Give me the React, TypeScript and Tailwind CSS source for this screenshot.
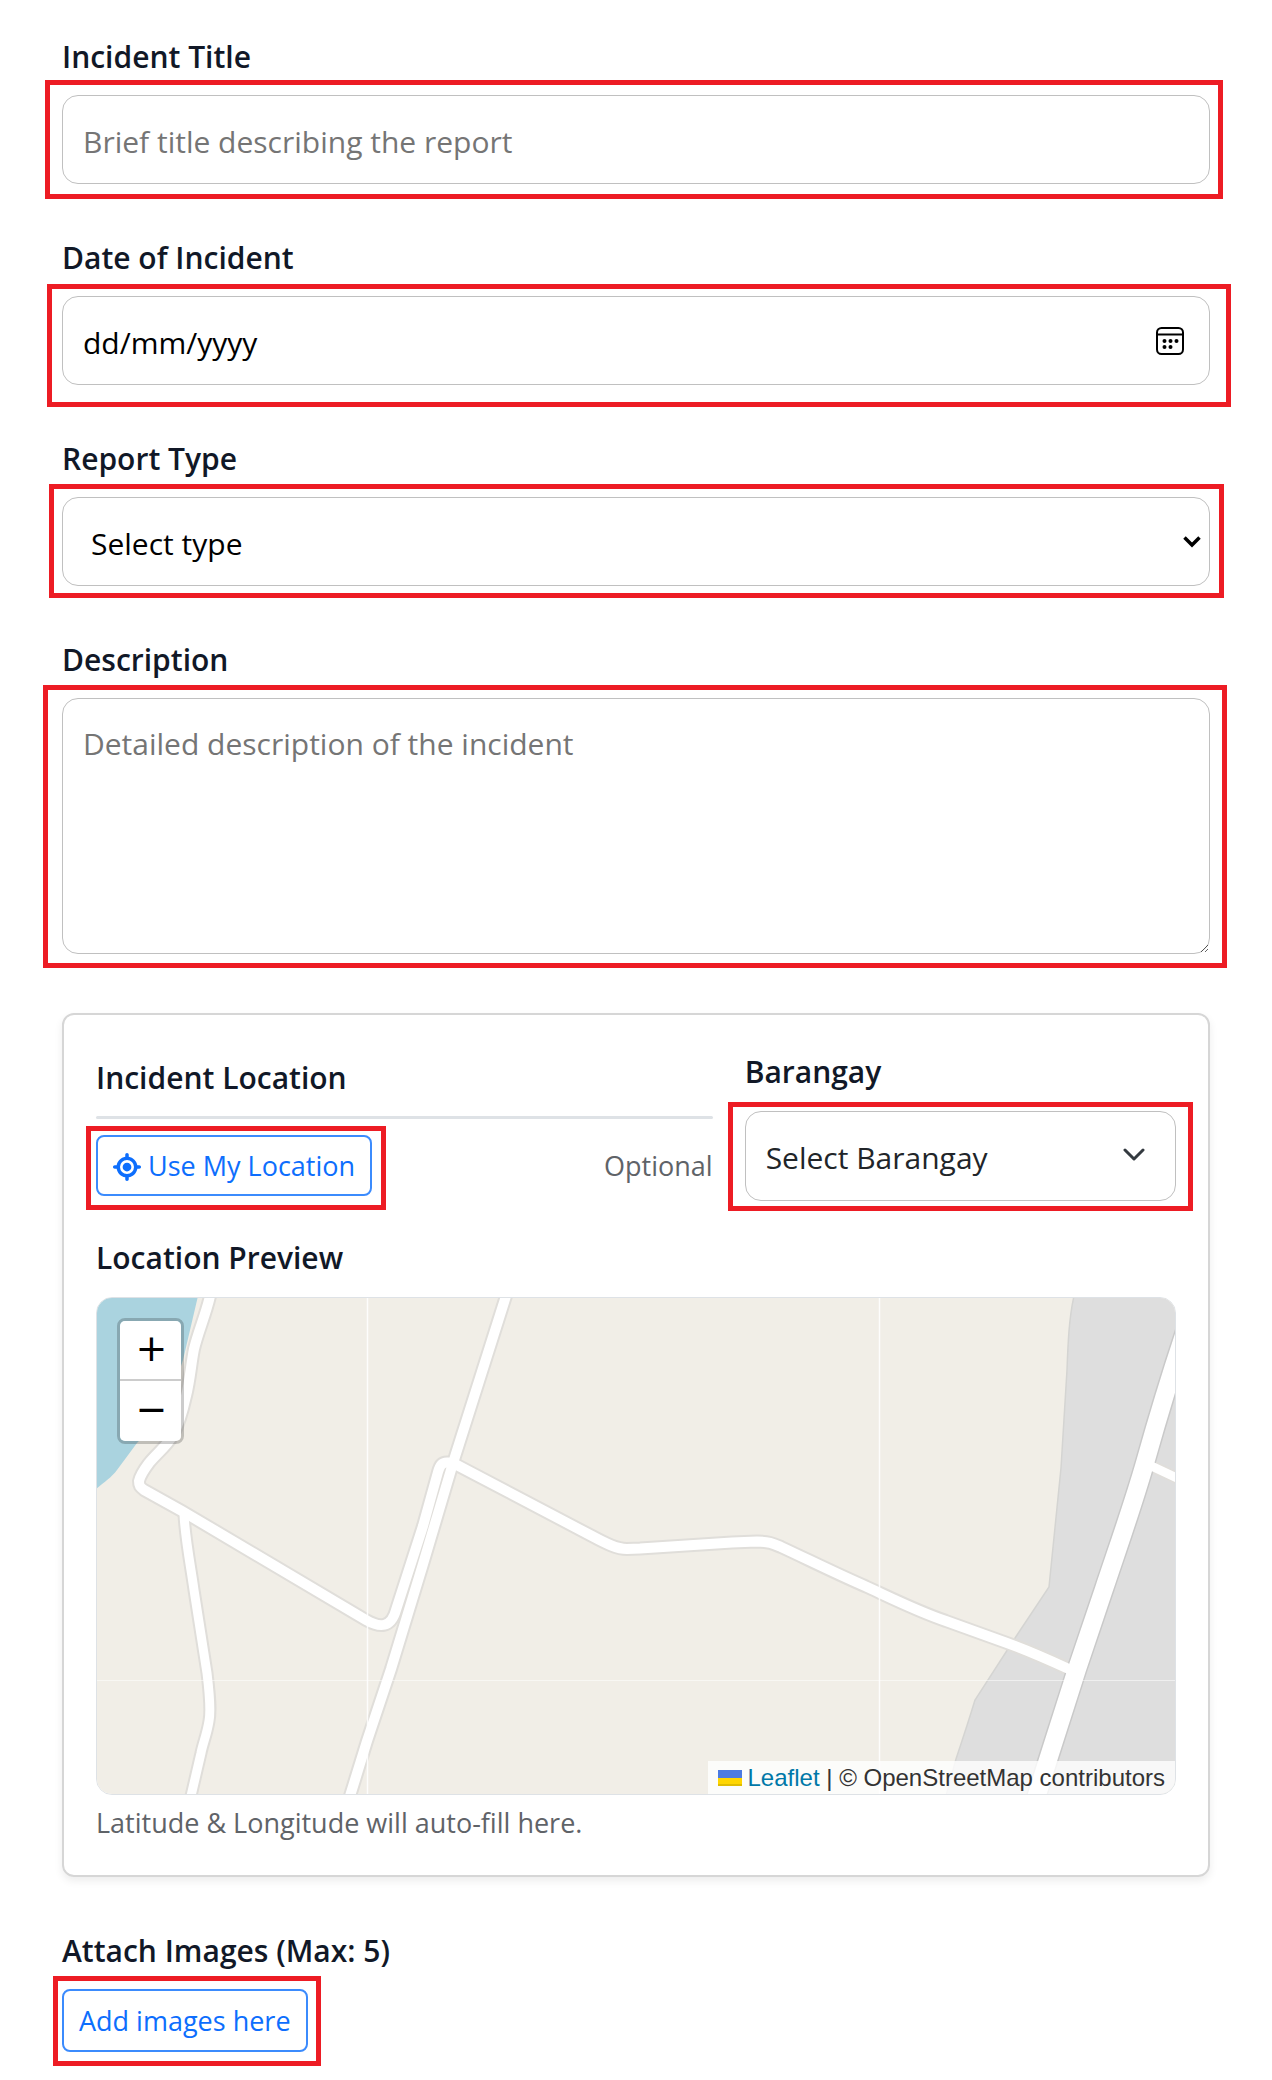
import type { ReactNode } from "react";
import { FaLocationCrosshairs } from "react-icons/fa6";

const labelClass = "block text-[30px] leading-[42px] font-semibold text-[#111827]";
const fieldClass =
  "block w-full rounded-2xl border border-[#c0c0c0] bg-white px-5 text-[30px] placeholder:text-[#757575]";

/** Wraps a control and draws a red annotation frame around it. */
function Marked({ frame, className = "", children }: { frame: string; className?: string; children: ReactNode }) {
  return (
    <div className={`relative ${className}`}>
      {children}
      <span aria-hidden="true" className={`pointer-events-none absolute border-[5px] border-[#ed1c24] ${frame}`} />
    </div>
  );
}

function CalendarIcon() {
  return (
    <svg viewBox="0 0 28 28" className="size-7" fill="none" stroke="black" strokeWidth="2" aria-hidden="true">
      <rect x="1" y="1" width="26" height="26" rx="4.5" />
      <path d="M1 7.500H27" />
      <g fill="black" stroke="none">
        <circle cx="8.500" cy="14" r="2" />
        <circle cx="14.500" cy="14" r="2" />
        <circle cx="20.500" cy="14" r="2" />
        <circle cx="8.500" cy="20" r="2" />
        <circle cx="14.500" cy="20" r="2" />
      </g>
    </svg>
  );
}

const loopRoad =
  "M113 -2C109 16 101 34 97 51C94 66 93 82 89 98C85 116 81 128 76 137C70 148 60 155 52 165C46 173 43 178 42 183C42 188 43 189 47 192L85 213L269 322C283 330 294 330 299 312L326 228L341 174C343 167 345 164 351 164.500L356 165L495 238C510 246 520 251 530 251L543 250.500L635 244.500L660 243.500C672 243.500 677 246 684 249C712 262 740 276 769 288.500C796 301 822 314 849 323L910 345C935 354 950 361 974 372";
const northRoad = "M409 -2L356 165L326 266L294 371L270 443L253 498";
const westRoad = "M87 216C88 240 94 270 97 292L110 375C113 400 114 413 112 423C110 436 106 445 104 455L94 498";
const mainRoad = "M1097 8C1077 65 1064 108 1048 165C1036 207 1021 249 1007 291L980 371L950 465L939 500";
const sideRoad = "M1048 165L1082 181";
const builtUp = "M977 -2C972 20 971 45 970 72L964 170L952 289L920 337L878 402C871 425 866 440 859 461L849 498H1080V-2Z";

function MapTiles() {
  return (
    <svg
      viewBox="0 0 1078 496"
      preserveAspectRatio="xMidYMid slice"
      className="block h-full w-full"
      fill="none"
      aria-hidden="true"
    >
      <rect width="1078" height="496" fill="#f1eee7" />
      <path d="M-2 -2H101L86 62C74 100 60 125 40 145L20 172C14 180 6 185 -2 192Z" fill="#aad3df" />
      <path d={builtUp} fill="#dedede" stroke="#d4d4d2" strokeWidth="1.500" />
      <g stroke="#e0deda" strokeWidth="14">
        <path d={westRoad} strokeWidth="13" />
        <path d={loopRoad} />
        <path d={northRoad} strokeWidth="14" />
        <path d={sideRoad} strokeWidth="12" />
      </g>
      <path d={mainRoad} stroke="#c9c9c9" strokeWidth="21" />
      <g stroke="white" strokeWidth="10">
        <path d={westRoad} strokeWidth="9" />
        <path d={loopRoad} />
        <path d={northRoad} />
        <path d={sideRoad} strokeWidth="9" />
      </g>
      <path d={mainRoad} stroke="white" strokeWidth="18" />
      <path d="M270.500 0V496M782.500 0V496" stroke="white" strokeWidth="1.500" opacity="0.850" />
      <path d="M0 382.500H1078" stroke="white" opacity="0.500" />
    </svg>
  );
}

export default function App() {
  return (
    <form
      className="flex flex-col gap-[53px] bg-white px-[62px] pt-9 pb-4 font-['Open_Sans','Noto_Sans',sans-serif]"
      onSubmit={(e) => e.preventDefault()}
    >
      <div>
        <label htmlFor="title" className={labelClass}>Incident Title</label>
        <Marked className="mt-[17px]" frame="-top-[15px] -right-[13px] -bottom-[15px] -left-[17px]">
          <input id="title" type="text" placeholder="Brief title describing the report" className={`${fieldClass} h-[89px] pt-[3px]`} />
        </Marked>
      </div>

      <div>
        <label htmlFor="date" className={labelClass}>Date of Incident</label>
        <Marked className="mt-[17px]" frame="-top-3 -right-[21px] -bottom-[22px] -left-[15px]">
          <input
            id="date"
            type="text"
            inputMode="numeric"
            placeholder="dd/mm/yyyy"
            className={`${fieldClass} h-[89px] pt-[3px] placeholder:text-black`}
          />
          <button type="button" aria-label="Open calendar" className="absolute inset-y-0 right-[26px] flex items-center">
            <CalendarIcon />
          </button>
        </Marked>
      </div>

      <div>
        <label htmlFor="type" className={labelClass}>Report Type</label>
        <Marked className="mt-[17px]" frame="-top-[13px] -right-[14px] -bottom-3 -left-[13px]">
          <select id="type" defaultValue="" className={`${fieldClass} h-[89px] appearance-none pt-[3px] pl-7 text-black`}>
            <option value="">Select type</option>
          </select>
          <svg
            viewBox="0 0 18 12"
            className="pointer-events-none absolute top-[39px] right-[9px] h-3 w-[18px]"
            fill="none"
            stroke="black"
            strokeWidth="3.500"
            aria-hidden="true"
          >
            <path d="M1.500 1.500L9 9L16.500 1.500" />
          </svg>
        </Marked>
      </div>

      <div>
        <label htmlFor="description" className={labelClass}>Description</label>
        <Marked className="mt-[17px]" frame="-top-[13px] -right-[17px] -bottom-[14px] -left-[19px]">
          <textarea
            id="description"
            placeholder="Detailed description of the incident"
            className={`${fieldClass} h-64 py-6 leading-[42px]`}
          />
        </Marked>
      </div>

      <section className="mt-1.5 rounded-xl border-2 border-[#d6d6d6] px-8 pt-9 pb-[34px] shadow-[0_4px_8px_rgba(0,0,0,0.075)]">
        <div className="grid grid-cols-12 gap-8">
          <div className="col-span-7 pt-1.5">
            <h2 className={labelClass}>Incident Location</h2>
            <hr className="mt-[17px] h-[3px] rounded-full border-0 bg-[#dee2e6]" />
            <div className="mt-4 flex items-center justify-between">
              <Marked frame="-top-[9px] -right-[14px] -bottom-[14px] -left-[10px]">
                <button
                  type="button"
                  className="flex h-[61px] items-center gap-[7px] rounded-lg border-2 border-[#3b8bfd] px-[15px] pt-0.5 text-[27px] text-[#0d6efd]"
                >
                  <FaLocationCrosshairs className="size-7" aria-hidden="true" />
                  Use My Location
                </button>
              </Marked>
              <span className="pt-0.5 text-[27px] text-[#5f6368]">Optional</span>
            </div>
          </div>

          <div className="col-span-5">
            <label htmlFor="barangay" className={labelClass}>Barangay</label>
            <Marked className="mt-[18px]" frame="-top-[9px] -right-[17px] -bottom-2.5 -left-[17px]">
              <select id="barangay" defaultValue="" className={`${fieldClass} h-[90px] appearance-none pt-[3px] text-[#212529]`}>
                <option value="">Select Barangay</option>
              </select>
              <svg
                viewBox="0 0 22 14"
                className="pointer-events-none absolute top-[37px] right-[31px] h-3.5 w-[22px]"
                fill="none"
                stroke="#343a40"
                strokeWidth="3"
                strokeLinecap="round"
                strokeLinejoin="round"
                aria-hidden="true"
              >
                <path d="M2 2L11 11L20 2" />
              </svg>
            </Marked>
          </div>
        </div>

        <h2 className={`${labelClass} mt-9`}>Location Preview</h2>
        <div className="relative mt-[18px] h-[498px] overflow-hidden rounded-2xl border border-[#dee2e6]">
          <MapTiles />
          <div className="absolute top-5 left-5 w-[67px] rounded-lg border-[3px] border-black/20 bg-clip-padding font-['DejaVu_Sans',sans-serif] text-[38px] text-black">
            <button
              type="button"
              aria-label="Zoom in"
              className="flex h-[60px] w-full items-center justify-center rounded-t-[5px] border-b-2 border-[#ccc] bg-white pb-1 pl-0.5 leading-none"
            >
              +
            </button>
            <button
              type="button"
              aria-label="Zoom out"
              className="flex h-[60px] w-full items-center justify-center rounded-b-[5px] bg-white pb-1 pl-0.5 leading-none"
            >
              −
            </button>
          </div>
          <div className="absolute right-0 bottom-0 flex h-[33px] items-center bg-white/80 px-2.5 font-['Liberation_Sans',Arial,sans-serif] text-2xl whitespace-pre text-[#333]">
            <a href="https://leafletjs.com" className="flex items-center gap-1.5 text-[#0078a8]">
              <svg viewBox="0 0 12 8" className="h-4 w-6" aria-hidden="true">
                <path fill="#4C7BE1" d="M0 0h12v4H0z" />
                <path fill="#FFD500" d="M0 4h12v3H0z" />
                <path fill="#E0BC00" d="M0 7h12v1H0z" />
              </svg>
              Leaflet
            </a>
            <span> | © OpenStreetMap contributors</span>
          </div>
        </div>
        <p className="mt-2.5 text-[27px] leading-9 text-[#5f6368]">Latitude &amp; Longitude will auto-fill here.</p>
      </section>

      <div>
        <h2 className={labelClass}>Attach Images (Max: 5)</h2>
        <Marked className="mt-[17px] w-fit" frame="-top-[13px] -right-[13px] -bottom-[14px] -left-[9px]">
          <button type="button" className="h-[63px] rounded-lg border-2 border-[#3b8bfd] px-[15px] pt-0.5 text-[27px] text-[#0d6efd]">
            Add images here
          </button>
        </Marked>
      </div>
    </form>
  );
}
